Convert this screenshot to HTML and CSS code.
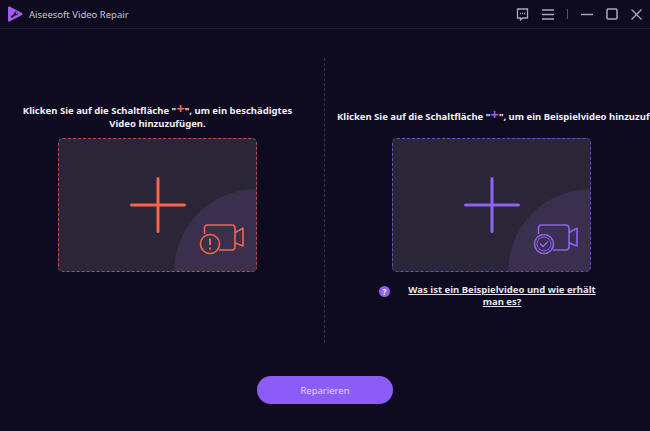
FILE: index.html
```html
<!DOCTYPE html>
<html lang="en">

<head>
    <meta charset="UTF-8">
    <title>Aiseesoft Video Repair</title>
    <link rel="stylesheet" href="styles.css">
</head>

<body>
    <header class="titlebar">
        <svg class="logo" width="16" height="16" viewBox="0 0 16 16">
            <path d="M1 1.5 C1 .6 1.8 .2 2.6 .6 L15 7 C15.8 7.5 15.8 8.5 15 9 L2.6 15.4 C1.8 15.8 1 15.4 1 14.5 Z" fill="#a45cf0" />
            <path d="M3.5 10.5 L7 8 A2.4 2.4 0 0 1 9.8 5.4 L8.4 6.8 L9.6 8 L11 6.8 A2.4 2.4 0 0 1 8 9.4 L5 12 Z" fill="#1b1030" />
        </svg>
        <span class="app-name">Aiseesoft Video Repair</span>
        <div class="window-tools">
            <svg width="13" height="13" viewBox="0 0 13 13" fill="none" stroke="#aaa8b2" stroke-width="1.3">
                <path d="M1.5 1 H11.5 V10 H6.5 L4.5 12 V10 H1.5 Z" />
                <path d="M4 5.5 H5 M6 5.5 H7 M8 5.5 H9" />
            </svg>
            <svg width="12" height="11" viewBox="0 0 12 11" stroke="#aaa8b2" stroke-width="1.5">
                <path d="M0 1 H12 M0 5.5 H12 M0 10 H12" />
            </svg>
            <span class="tool-sep"></span>
            <svg width="12" height="11" viewBox="0 0 12 11" stroke="#aaa8b2" stroke-width="1.4">
                <path d="M0 5.5 H12" />
            </svg>
            <svg width="12" height="12" viewBox="0 0 12 12" fill="none" stroke="#aaa8b2" stroke-width="1.5">
                <rect x="1" y="1" width="10" height="10" rx="1" />
            </svg>
            <svg width="11" height="11" viewBox="0 0 11 11" stroke="#aaa8b2" stroke-width="1.3">
                <path d="M.5 .5 L10.5 10.5 M10.5 .5 L.5 10.5" />
            </svg>
        </div>
    </header>

    <main class="content">
        <section class="panel panel-left">
            <div class="prompt">
                <p>Klicken Sie auf die Schaltfläche "<span class="mini-plus red">+</span>", um ein beschädigtes<br>Video hinzuzufügen.</p>
            </div>
            <div class="dropbox red-box">
                <svg class="big-plus" width="56" height="56" viewBox="0 0 56 56" stroke="#f2654a" stroke-width="3" stroke-linecap="round">
                    <path d="M28 1.5 V54.5 M1.5 28 H54.5" />
                </svg>
                <svg class="cam" width="50" height="36" viewBox="0 0 50 36" fill="none" stroke="#f2654a" stroke-width="1.6" stroke-linejoin="round">
                    <path d="M5.5 13 V7 a3 3 0 0 1 3-3 H33 a3 3 0 0 1 3 3 V26 a3 3 0 0 1-3 3 H20" />
                    <path d="M35.7 11.7 L44 7.3 V25 L35.7 21.7" />
                    <circle cx="11" cy="23" r="9.5" />
                    <path d="M11 17.5 V24 M11 26.5 V28.5" stroke-width="2" />
                </svg>
            </div>
        </section>

        <div class="divider"></div>

        <section class="panel panel-right">
            <div class="prompt">
                <p>Klicken Sie auf die Schaltfläche "<span class="mini-plus violet">+</span>", um ein Beispielvideo hinzuzufügen.</p>
            </div>
            <div class="dropbox violet-box">
                <svg class="big-plus" width="56" height="56" viewBox="0 0 56 56" stroke="#8f62f0" stroke-width="3" stroke-linecap="round">
                    <path d="M28 1.5 V54.5 M1.5 28 H54.5" />
                </svg>
                <svg class="cam" width="50" height="36" viewBox="0 0 50 36" fill="none" stroke="#8f62f0" stroke-width="1.6" stroke-linejoin="round">
                    <path d="M5.5 13 V7 a3 3 0 0 1 3-3 H33 a3 3 0 0 1 3 3 V26 a3 3 0 0 1-3 3 H20" />
                    <path d="M35.7 11.7 L44 7.3 V25 L35.7 21.7" />
                    <circle cx="11" cy="23" r="9.5" />
                    <circle cx="11" cy="23" r="7" stroke-width="1" />
                    <path d="M7.5 23 L10 25.5 L14.5 21" stroke-width="1.6" stroke-linecap="round" />
                </svg>
            </div>
            <div class="help">
                <span class="help-badge">?</span>
                <a class="help-link" href="#">Was ist ein Beispielvideo und wie erhält man es?</a>
            </div>
        </section>
    </main>

    <div class="actions">
        <button class="repair">Reparieren</button>
    </div>
</body>

</html>
```

FILE: styles.css
```css
* {
    box-sizing: border-box;
}

html,
body {
    height: 100%;
}

body {
    margin: 0;
    background-color: #0e0a1f;
    font-family: "Noto Sans", Arial, sans-serif;
    color: #f1f0f4;
    overflow: hidden;
}

.titlebar {
    height: 29px;
    display: flex;
    align-items: center;
    padding: 0 8px 0 7px;
    border-bottom: 1px solid #25202f;
}

.logo {
    margin-right: 6px;
}

.app-name {
    font-size: 9.5px;
    color: #c9c7cf;
}

.window-tools {
    margin-left: auto;
    display: flex;
    align-items: center;
    gap: 13px;
}

.tool-sep {
    width: 1px;
    height: 10px;
    background-color: #55525e;
}

.content {
    display: flex;
    height: 314px;
    padding-top: 29px;
}

.panel {
    display: flex;
    flex-direction: column;
}

.panel-left {
    width: 315px;
    align-items: center;
}

.panel-right {
    flex: 1;
    padding-left: 12px;
    overflow: hidden;
}

.divider {
    width: 0;
    height: 285px;
    margin-left: 9px;
    border-left: 1px dashed #3a3546;
}

.prompt {
    height: 80px;
    padding-bottom: 8px;
    display: flex;
    align-items: flex-end;
    text-align: center;
    font-size: 9.5px;
    font-weight: 700;
    line-height: 13px;
}

.prompt p {
    margin: 0;
    white-space: nowrap;
}

.panel-right .prompt {
    padding-bottom: 15px;
}

.mini-plus {
    font-size: 15px;
    line-height: 10px;
}

.red {
    color: #f2654a;
}

.violet {
    color: #8f62f0;
}

.dropbox {
    position: relative;
    width: 199px;
    height: 134px;
    flex: none;
    display: flex;
    align-items: center;
    justify-content: center;
    border-radius: 5px;
    background: radial-gradient(circle 82px at 100% 100%, #3a2f4c 99%, #2b2538 100%);
}

.red-box {
    border: 1px dashed #b94a45;
}

.violet-box {
    margin-left: 55px;
    border: 1px dashed #6b49c2;
}

.cam {
    position: absolute;
    right: 7px;
    bottom: 14px;
}

.help {
    display: flex;
    align-items: flex-start;
    gap: 8px;
    margin: 12px 0 0 42px;
}

.help-badge {
    width: 11px;
    height: 11px;
    margin-top: 2px;
    flex: none;
    border-radius: 50%;
    background-color: #8f62f0;
    color: #fff;
    font-size: 8px;
    font-weight: 700;
    line-height: 11px;
    text-align: center;
}

.help-link {
    width: 208px;
    color: #e6e4ea;
    font-size: 9.5px;
    font-weight: 700;
    line-height: 12px;
    text-align: center;
}

.actions {
    display: flex;
    justify-content: center;
    padding-top: 33px;
}

.repair {
    width: 136px;
    height: 28px;
    border: none;
    border-radius: 14px;
    background-color: #8b5cf6;
    color: #e3d8fb;
    font-family: "Noto Sans", Arial, sans-serif;
    font-size: 9.5px;
}
```
